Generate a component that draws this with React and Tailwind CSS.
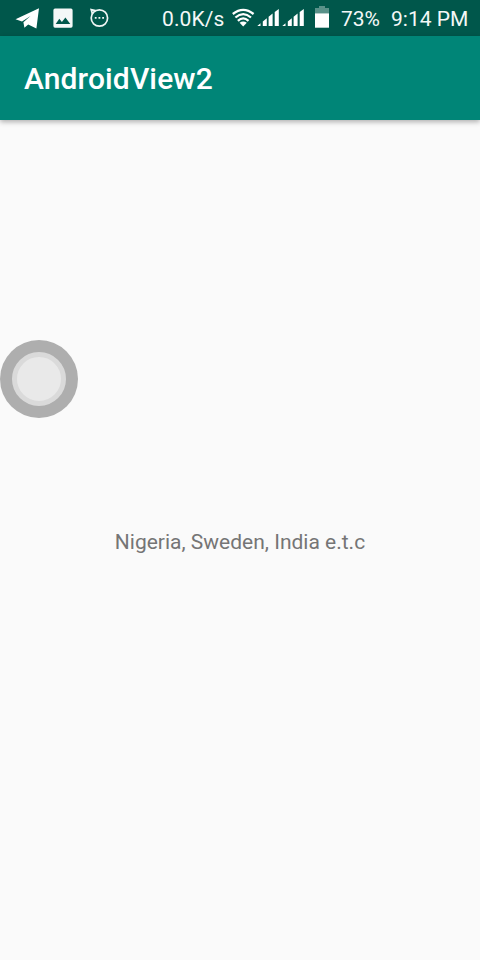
function Signal() {
  return (
    <svg className="block h-[18px] w-[22px]" viewBox="0 0 22 18" fill="#fff">
      <path d="M.3 17 3.5 14.3V17ZM5.8 17V12.4L9.8 9.2V17ZM11.6 17V7.8L15.6 4.6V17ZM17.7 17V3L21.8 0V17Z" />
    </svg>
  );
}

function StatusBar() {
  return (
    <header className="flex h-9 items-start bg-[#00574b] text-[21px] leading-[38px] text-[#f4f8f7]">
      <svg className="mt-2 ml-[15px] h-[22px] w-[24px]" viewBox="0 0 24 22" fill="#fff">
        <path d="M24 .3 21.4 20.6 13.2 16.4 9.4 19.8 8.4 14.2 15.5 8 7 13.6.5 11.3Z" />
      </svg>
      <svg className="mt-2 ml-[14px] h-5 w-5" viewBox="0 0 20 20" fill="#f4f8f7">
        <path fillRule="evenodd" d="M2 .5H18Q19.6.5 19.6 2.2V18Q19.6 19.7 18 19.7H2Q.4 19.7.4 18V2.2Q.4.5 2 .5ZM2.7 16H17.3L12.4 9.4 8.9 14 6.3 10.8Z" />
      </svg>
      <svg className="mt-2 ml-[16px] h-5 w-[21px]" viewBox="0 0 21 20" fill="none" stroke="#f0f6f5" strokeWidth="1.7">
        <circle cx="10.4" cy="10" r="8.2" />
        <path d="M3.4 5.8 2.2 1.6 6.6 2.6" />
        <path d="M5.8 9.8H7.6M9.5 9.8H11.3M13.2 9.8H15" strokeWidth="1.8" />
      </svg>
      <span className="ml-[52px] w-[70px] whitespace-nowrap tracking-[.1px]">0.0K/s</span>
      <svg className="mt-2 h-[19px] w-[23px]" viewBox="0 0 23 19" fill="none" stroke="#fff" strokeWidth="2.3">
        <path d="M.8 6Q11.2-2.3 21.6 6M3.4 9.5Q11.2 2.7 19 9.5M5.9 12.9Q11.2 7.9 16.5 12.9" />
        <path d="M7.6 14.8Q11.2 12 14.8 14.8L11.2 18.6Z" fill="#fff" stroke="none" />
      </svg>
      <div className="mt-[9px] ml-[2px] flex gap-[3px]">
        <Signal />
        <Signal />
      </div>
      <svg className="mt-[6px] ml-[11px] h-[22px] w-[14px]" viewBox="0 0 14 22" fill="#fff">
        <path d="M4 0H10V2H14V7.3H0V2H4Z" fillOpacity=".35" />
        <path d="M0 7.3H14V21.7H0Z" />
      </svg>
      <span className="ml-[12px] w-[50px] whitespace-nowrap">73%</span>
      <span className="whitespace-nowrap">9:14 PM</span>
    </header>
  );
}

export default function App() {
  return (
    <div className="relative flex h-[960px] w-[480px] flex-col overflow-hidden bg-[#fafafa] font-['Roboto',sans-serif]">
      <StatusBar />
      <div className="flex h-[84px] items-center bg-[#008577] pt-[2px] pl-6 shadow-[0_2px_5px_rgba(0,0,0,0.3)]">
        <h1 className="text-[30px] leading-[36px] font-medium tracking-[.12px] text-white">AndroidView2</h1>
      </div>
      <main className="flex flex-1 items-center justify-center">
        <p className="mt-[3px] text-[21px] leading-7 text-[#757575]">Nigeria, Sweden, India e.t.c</p>
      </main>
      <div className="absolute top-[340px] left-0 flex size-[78px] items-center justify-center rounded-full bg-[#aeaeae]">
        <div className="size-[54px] rounded-full border-[5px] border-[#dadada] bg-[#e9e9e9]" />
      </div>
    </div>
  );
}
